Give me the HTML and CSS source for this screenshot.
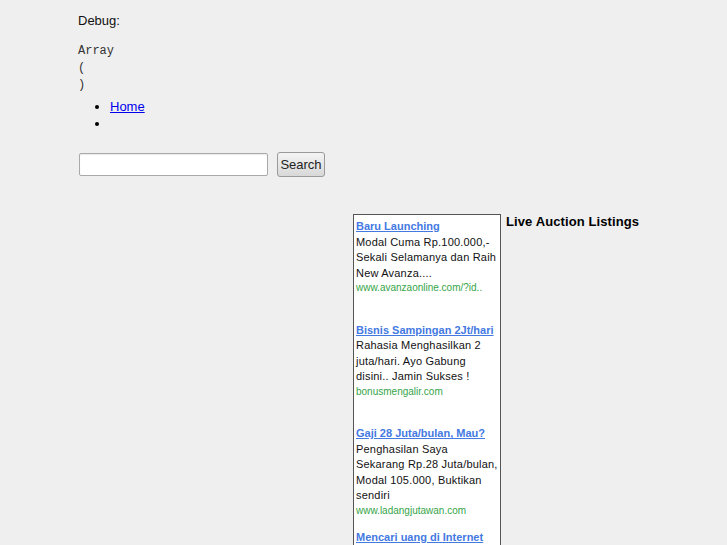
FILE: index.html
```html
<!DOCTYPE html>
<html>
<head>
<meta charset="utf-8">
<link rel="stylesheet" href="styles.css">
</head>
<body>
<div class="page">
  <div class="debug">Debug:</div>
  <pre class="dump">Array
(
)</pre>
  <ul class="menu">
    <li><a href="#">Home</a></li>
    <li></li>
  </ul>
  <form class="search">
    <input type="text" class="search-input">
    <button type="button" class="search-btn">Search</button>
  </form>
  <div class="content">
    <div class="ads">
      <div class="ad">
        <a class="ad-title" href="#">Baru Launching</a>
        <div class="ad-desc">Modal Cuma Rp.100.000,- Sekali Selamanya dan Raih New Avanza....</div>
        <div class="ad-url">www.avanzaonline.com/?id..</div>
      </div>
      <div class="ad">
        <a class="ad-title" href="#">Bisnis Sampingan 2Jt/hari</a>
        <div class="ad-desc">Rahasia Menghasilkan 2 juta/hari. Ayo Gabung disini.. Jamin Sukses !</div>
        <div class="ad-url">bonusmengalir.com</div>
      </div>
      <div class="ad">
        <a class="ad-title" href="#">Gaji 28 Juta/bulan, Mau?</a>
        <div class="ad-desc">Penghasilan Saya Sekarang Rp.28 Juta/bulan, Modal 105.000, Buktikan sendiri</div>
        <div class="ad-url">www.ladangjutawan.com</div>
      </div>
      <div class="ad">
        <a class="ad-title" href="#">Mencari uang di Internet</a>
        <div class="ad-desc">Penghasilan tambahan dari rumah tanpa modal besar</div>
        <div class="ad-url">www.uangdiinternet.com</div>
      </div>
    </div>
    <h2 class="listings">Live Auction Listings</h2>
  </div>
</div>
</body>
</html>
```
FILE: styles.css
```css
html, body {
  margin: 0;
  padding: 0;
  background: #efefef;
  height: 545px;
  overflow: hidden;
}
body {
  font-family: "Liberation Sans", Arial, sans-serif;
  font-size: 13px;
  color: #000;
}
.page {
  padding: 12px 0 0 78px;
}
.debug {
  line-height: 17px;
  color: #111;
}
.dump {
  margin: 14px 0 0;
  font-family: "Liberation Mono", "Courier New", monospace;
  font-size: 12px;
  line-height: 17px;
  color: #333;
}
.menu {
  margin: 4px 0 0;
  padding-left: 32px;
  line-height: 17px;
  height: 34px;
}
.menu li {
  height: 17px;
}
.menu a {
  color: #0000ee;
}
.search {
  margin: 20px 0 0 1px;
  display: flex;
  align-items: center;
  gap: 9px;
}
.search-input {
  box-sizing: border-box;
  width: 189px;
  height: 23px;
  margin: 0;
  border: 1px solid #a9a9a9;
  border-radius: 2px;
  background: #fff;
  box-shadow: inset 0 1px 1px rgba(0,0,0,0.08);
}
.search-btn {
  box-sizing: border-box;
  width: 48px;
  height: 25px;
  margin: 0;
  padding: 0;
  border: 1px solid #9a9a9a;
  border-radius: 3px;
  background: linear-gradient(#f4f4f4, #d8d8d8);
  font-family: "Liberation Sans", Arial, sans-serif;
  font-size: 13px;
  color: #222;
}
.content {
  margin: 37px 0 0 275px;
  display: flex;
  align-items: flex-start;
}
.ads {
  box-sizing: border-box;
  width: 148px;
  height: 600px;
  border: 1px solid #555;
  background: #fff;
  padding: 4px 2px 0 2px;
  flex: none;
}
.ad {
  height: 103.7px;
  font-size: 11px;
  line-height: 15.5px;
}
.ad-title {
  font-weight: bold;
  color: #4479e2;
  text-decoration: underline;
  display: block;
}
.ad-desc {
  color: #111;
  letter-spacing: 0.2px;
}
.ad-url {
  font-size: 10px;
  color: #35a447;
  line-height: 13px;
}
.listings {
  margin: 0 0 0 5px;
  font-size: 13px;
  line-height: 16px;
  font-weight: bold;
  letter-spacing: 0.1px;
}
```
